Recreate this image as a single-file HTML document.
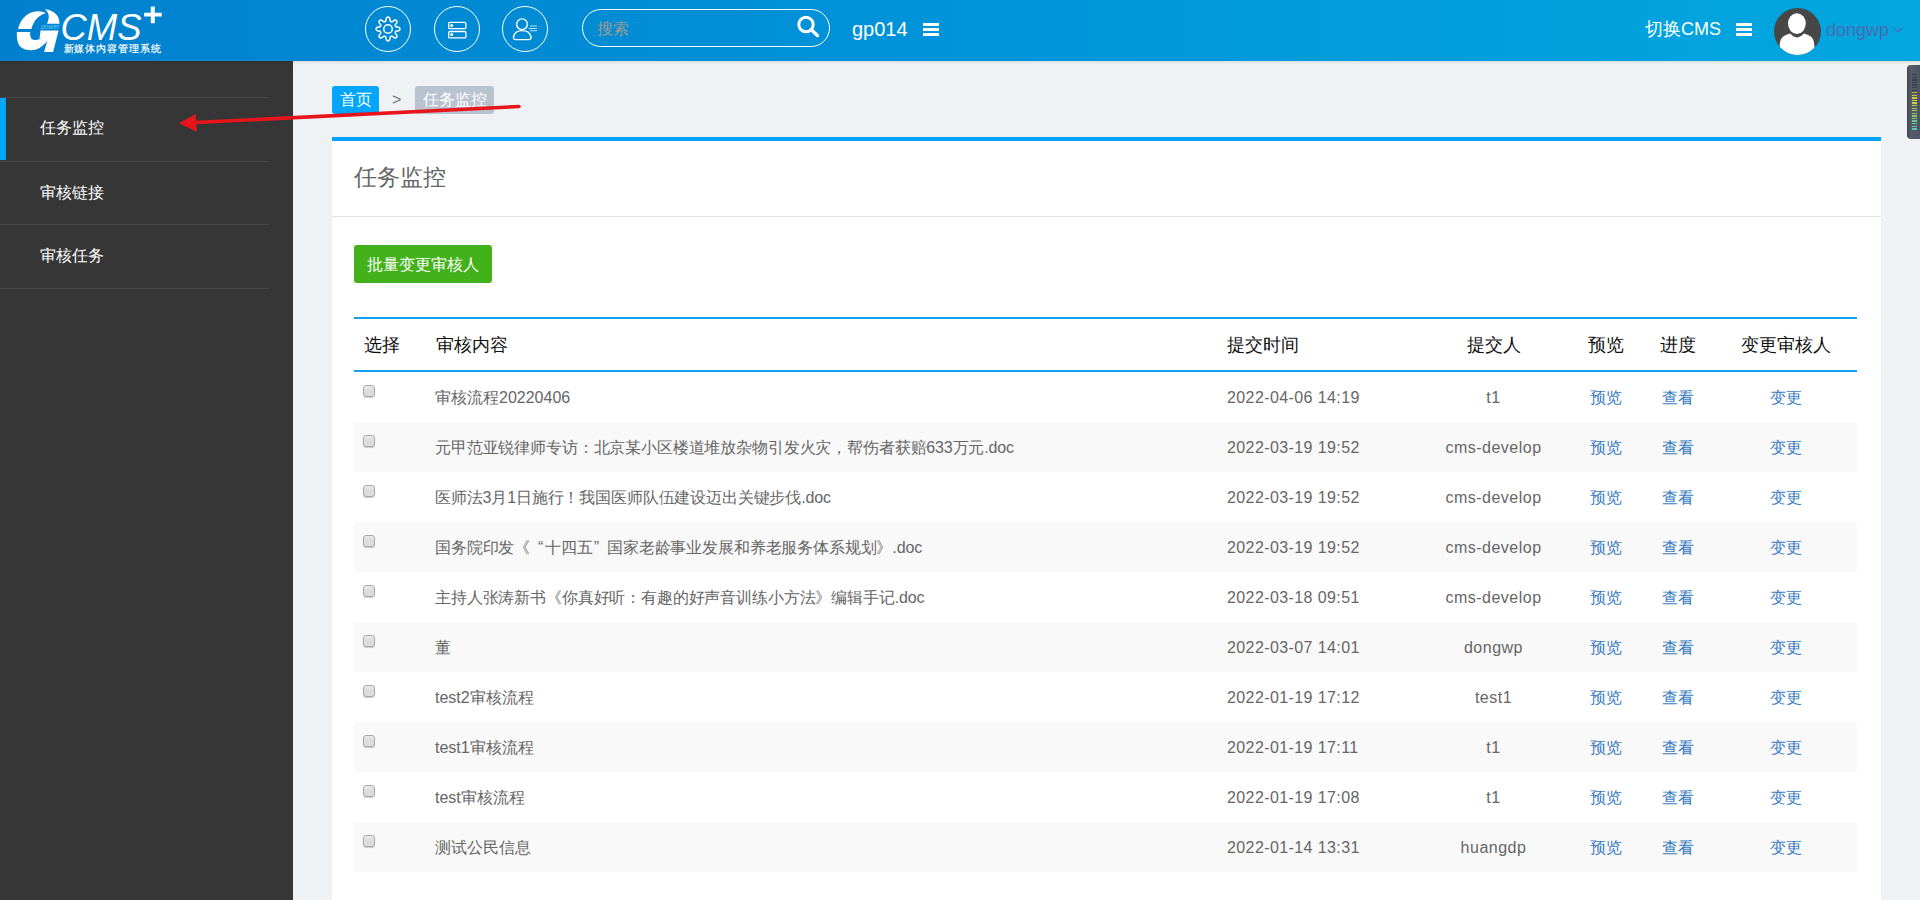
<!DOCTYPE html>
<html><head><meta charset="utf-8">
<style>
*{box-sizing:border-box;margin:0;padding:0}
html,body{width:1920px;height:900px;overflow:hidden;font-family:"Liberation Sans",sans-serif;background:#eef2f5}
.abs{position:absolute}
#hdr{position:absolute;z-index:2;box-shadow:0 1px 3px rgba(0,0,0,.12);left:0;top:0;width:1920px;height:61px;background:linear-gradient(to right,#0180ce 0%,#0094da 50%,#02a7df 100%)}
#side{position:absolute;left:0;top:61px;width:293px;height:839px;background:#363636}
.sl{position:absolute;left:0;width:269px;height:1px;background:#484848}
.si{position:absolute;left:40px;color:#fff;font-size:16px;line-height:20px;white-space:nowrap}
.circ{position:absolute;top:6px;width:46px;height:46px;border:1.3px solid #fff;border-radius:50%}
.txt{white-space:nowrap}
#panel{position:absolute;left:332px;top:137px;width:1549px;height:763px;background:#fff;border-top:4px solid #00a2ff}
table{position:absolute;left:22px;top:176px;width:1503px;border-collapse:collapse;table-layout:fixed}
th{height:53px;font-weight:normal;font-size:18px;color:#111;text-align:left;padding:0 10px;border-top:2px solid #0ea2f0;border-bottom:2px solid #0ea2f0}
td:nth-child(2){padding-left:9px}
.n{letter-spacing:-.15px}
td:nth-child(3){letter-spacing:.4px}
td:nth-child(4){letter-spacing:.5px}
td{height:50px;font-size:16px;line-height:20px;color:#666;padding:16px 10px 0;vertical-align:top;white-space:nowrap}
tr.s td{background:#f9f9f9}
tbody tr:first-child td{height:51px}
.c{text-align:center}
a{color:#3a7cc2;text-decoration:none}
.cb{display:inline-block;width:12px;height:12px;border:1px solid #a9a9a9;border-radius:3px;background:linear-gradient(#ececec,#dcdcdc 40%,#dcdcdc);box-shadow:0 1px 1px rgba(0,0,0,.2);position:relative;top:-6px;left:-1px}
</style></head><body>
<div id="hdr">
  <!-- logo -->
  <svg class="abs" style="left:0;top:0" width="175" height="60" viewBox="0 0 175 60">
    <path fill="#fff" d="M18.1 28.9 C19.5 23 22 19 26 15.5 C30 12.5 34 11.3 38.3 11.3 C41 11.3 43.5 12 45.8 13.2 C42.5 14.2 39.5 15.8 37.3 18 C34.5 21 32.5 24.5 31.4 28.9 Z"/>
    <path fill="#fff" d="M16.9 32 L30.2 32 C29.8 35 30.5 38.5 32.5 39.6 C35 40.8 38.5 39.5 41 38.5 C44 37.4 47.5 36.8 49.9 36.7 C47.5 41 44 45.5 39.5 48 C36.5 49.6 33.5 50.3 30.2 50.2 C25.5 50.1 21 48.5 18.7 44.5 C17 41.5 16.6 36 16.9 32 Z"/>
    <path fill="#fff" d="M44.7 9.2 C50 9.6 54 11.5 56.8 15 C58.8 17.8 59.4 20.5 59.5 23.7 L47 23.7 C48.3 20.5 49.3 17.5 48.5 14.5 C47.8 12 46.5 10.5 44.7 9.2 Z"/>
    <path fill="#fff" d="M40.6 30.6 L58.6 30.6 L53.1 52 L44.1 52 L48.2 37.4 L39.5 38.7 Z"/>
    <text x="41" y="28.8" font-family="Liberation Sans" font-size="6.6" font-style="italic" fill="#62cdf6" textLength="18.5" lengthAdjust="spacingAndGlyphs">power</text>
    <text x="60.5" y="40.3" font-family="Liberation Sans" font-size="37" font-style="italic" fill="#fff" textLength="81" lengthAdjust="spacingAndGlyphs">CMS</text>
    <path fill="#fff" d="M150.8 6.5 h4 v6.3 h6.9 v3.6 h-6.9 v6.9 h-4 v-6.9 h-6.7 v-3.6 h6.7 z"/>
    <text x="63.5" y="51.9" font-family="Liberation Sans" font-size="9.6" font-weight="normal" fill="#fff" stroke="#fff" stroke-width="0.2" textLength="97.5" lengthAdjust="spacing">新媒体内容管理系统</text>
  </svg>
  <div class="circ" style="left:365px"></div>
  <div class="circ" style="left:434px"></div>
  <div class="circ" style="left:502px"></div>
  <svg class="abs" style="left:374.2px;top:15.2px" width="28" height="28" viewBox="0 0 28 28">
    <path fill="none" stroke="#fff" stroke-width="1.5" stroke-linejoin="round" d="M25.90 14.00 L25.89 14.23 L25.85 14.47 L25.78 14.69 L25.68 14.92 L25.53 15.14 L25.31 15.34 L25.03 15.52 L24.65 15.69 L24.20 15.82 L23.71 15.93 L23.22 16.02 L22.77 16.10 L22.39 16.19 L22.09 16.28 L21.86 16.39 L21.69 16.50 L21.55 16.62 L21.45 16.75 L21.37 16.88 L21.30 17.02 L21.25 17.17 L21.21 17.32 L21.19 17.49 L21.20 17.67 L21.25 17.87 L21.33 18.11 L21.48 18.38 L21.69 18.71 L21.95 19.09 L22.23 19.50 L22.50 19.93 L22.73 20.34 L22.87 20.72 L22.95 21.05 L22.95 21.35 L22.91 21.61 L22.82 21.84 L22.71 22.05 L22.57 22.24 L22.41 22.41 L22.24 22.57 L22.05 22.71 L21.84 22.82 L21.61 22.91 L21.35 22.95 L21.05 22.95 L20.72 22.87 L20.34 22.73 L19.93 22.50 L19.50 22.23 L19.09 21.95 L18.71 21.69 L18.38 21.48 L18.11 21.33 L17.87 21.25 L17.67 21.20 L17.49 21.19 L17.32 21.21 L17.17 21.25 L17.02 21.30 L16.88 21.37 L16.75 21.45 L16.62 21.55 L16.50 21.69 L16.39 21.86 L16.28 22.09 L16.19 22.39 L16.10 22.77 L16.02 23.22 L15.93 23.71 L15.82 24.20 L15.69 24.65 L15.52 25.03 L15.34 25.31 L15.14 25.53 L14.92 25.68 L14.69 25.78 L14.47 25.85 L14.23 25.89 L14.00 25.90 L13.77 25.89 L13.53 25.85 L13.31 25.78 L13.08 25.68 L12.86 25.53 L12.66 25.31 L12.48 25.03 L12.31 24.65 L12.18 24.20 L12.07 23.71 L11.98 23.22 L11.90 22.77 L11.81 22.39 L11.72 22.09 L11.61 21.86 L11.50 21.69 L11.38 21.55 L11.25 21.45 L11.12 21.37 L10.98 21.30 L10.83 21.25 L10.68 21.21 L10.51 21.19 L10.33 21.20 L10.13 21.25 L9.89 21.33 L9.62 21.48 L9.29 21.69 L8.91 21.95 L8.50 22.23 L8.07 22.50 L7.66 22.73 L7.28 22.87 L6.95 22.95 L6.65 22.95 L6.39 22.91 L6.16 22.82 L5.95 22.71 L5.76 22.57 L5.59 22.41 L5.43 22.24 L5.29 22.05 L5.18 21.84 L5.09 21.61 L5.05 21.35 L5.05 21.05 L5.13 20.72 L5.27 20.34 L5.50 19.93 L5.77 19.50 L6.05 19.09 L6.31 18.71 L6.52 18.38 L6.67 18.11 L6.75 17.87 L6.80 17.67 L6.81 17.49 L6.79 17.32 L6.75 17.17 L6.70 17.02 L6.63 16.88 L6.55 16.75 L6.45 16.62 L6.31 16.50 L6.14 16.39 L5.91 16.28 L5.61 16.19 L5.23 16.10 L4.78 16.02 L4.29 15.93 L3.80 15.82 L3.35 15.69 L2.97 15.52 L2.69 15.34 L2.47 15.14 L2.32 14.92 L2.22 14.69 L2.15 14.47 L2.11 14.23 L2.10 14.00 L2.11 13.77 L2.15 13.53 L2.22 13.31 L2.32 13.08 L2.47 12.86 L2.69 12.66 L2.97 12.48 L3.35 12.31 L3.80 12.18 L4.29 12.07 L4.78 11.98 L5.23 11.90 L5.61 11.81 L5.91 11.72 L6.14 11.61 L6.31 11.50 L6.45 11.38 L6.55 11.25 L6.63 11.12 L6.70 10.98 L6.75 10.83 L6.79 10.68 L6.81 10.51 L6.80 10.33 L6.75 10.13 L6.67 9.89 L6.52 9.62 L6.31 9.29 L6.05 8.91 L5.77 8.50 L5.50 8.07 L5.27 7.66 L5.13 7.28 L5.05 6.95 L5.05 6.65 L5.09 6.39 L5.18 6.16 L5.29 5.95 L5.43 5.76 L5.59 5.59 L5.76 5.43 L5.95 5.29 L6.16 5.18 L6.39 5.09 L6.65 5.05 L6.95 5.05 L7.28 5.13 L7.66 5.27 L8.07 5.50 L8.50 5.77 L8.91 6.05 L9.29 6.31 L9.62 6.52 L9.89 6.67 L10.13 6.75 L10.33 6.80 L10.51 6.81 L10.68 6.79 L10.83 6.75 L10.98 6.70 L11.12 6.63 L11.25 6.55 L11.38 6.45 L11.50 6.31 L11.61 6.14 L11.72 5.91 L11.81 5.61 L11.90 5.23 L11.98 4.78 L12.07 4.29 L12.18 3.80 L12.31 3.35 L12.48 2.97 L12.66 2.69 L12.86 2.47 L13.08 2.32 L13.31 2.22 L13.53 2.15 L13.77 2.11 L14.00 2.10 L14.23 2.11 L14.47 2.15 L14.69 2.22 L14.92 2.32 L15.14 2.47 L15.34 2.69 L15.52 2.97 L15.69 3.35 L15.82 3.80 L15.93 4.29 L16.02 4.78 L16.10 5.23 L16.19 5.61 L16.28 5.91 L16.39 6.14 L16.50 6.31 L16.62 6.45 L16.75 6.55 L16.88 6.63 L17.02 6.70 L17.17 6.75 L17.32 6.79 L17.49 6.81 L17.67 6.80 L17.87 6.75 L18.11 6.67 L18.38 6.52 L18.71 6.31 L19.09 6.05 L19.50 5.77 L19.93 5.50 L20.34 5.27 L20.72 5.13 L21.05 5.05 L21.35 5.05 L21.61 5.09 L21.84 5.18 L22.05 5.29 L22.24 5.43 L22.41 5.59 L22.57 5.76 L22.71 5.95 L22.82 6.16 L22.91 6.39 L22.95 6.65 L22.95 6.95 L22.87 7.28 L22.73 7.66 L22.50 8.07 L22.23 8.50 L21.95 8.91 L21.69 9.29 L21.48 9.62 L21.33 9.89 L21.25 10.13 L21.20 10.33 L21.19 10.51 L21.21 10.68 L21.25 10.83 L21.30 10.98 L21.37 11.12 L21.45 11.25 L21.55 11.38 L21.69 11.50 L21.86 11.61 L22.09 11.72 L22.39 11.81 L22.77 11.90 L23.22 11.98 L23.71 12.07 L24.20 12.18 L24.65 12.31 L25.03 12.48 L25.31 12.66 L25.53 12.86 L25.68 13.08 L25.78 13.31 L25.85 13.53 L25.89 13.77 Z"/>
    <circle cx="14" cy="14" r="4.3" fill="none" stroke="#fff" stroke-width="1.5"/>
  </svg>
  <svg class="abs" style="left:443px;top:15px" width="28" height="28" viewBox="0 0 28 28">
    <rect x="5.7" y="7.3" width="17.2" height="6.4" rx="1.2" fill="none" stroke="#fff" stroke-width="1.3"/>
    <rect x="5.7" y="16.5" width="17.2" height="6.4" rx="1.2" fill="none" stroke="#fff" stroke-width="1.3"/>
    <circle cx="8.7" cy="10.4" r="1.5" fill="#fff"/>
    <circle cx="8.7" cy="19.6" r="1.5" fill="#fff"/>
  </svg>
  <svg class="abs" style="left:511px;top:15px" width="28" height="28" viewBox="0 0 28 28">
    <circle cx="11" cy="9.3" r="5.4" fill="none" stroke="#fff" stroke-width="1.4"/>
    <path fill="none" stroke="#fff" stroke-width="1.4" d="M4.5 24.6 C2.3 24.6 2.3 23 2.6 21.5 C3.5 18 7 15.6 11.3 15.6 C15.6 15.6 19 18 19.9 21.5 C20.2 23 20.2 24.6 18 24.6 Z"/>
    <path stroke="#b8def5" stroke-width="1.1" d="M19 11 H26 M17.8 13.5 H26 M19 15.8 H26"/>
  </svg>
  <div class="abs" style="left:582px;top:9px;width:248px;height:38px;border:1px solid #fff;border-radius:19px"></div>
  <div class="abs txt" style="left:597px;top:19px;font-size:16px;line-height:20px;color:#a09a90">搜索</div>
  <svg class="abs" style="left:794px;top:13px" width="26" height="26" viewBox="0 0 26 26">
    <circle cx="12" cy="11.5" r="7.2" fill="none" stroke="#fff" stroke-width="3"/>
    <path d="M17.5 17 L23.5 22.5" stroke="#fff" stroke-width="3.4" stroke-linecap="round"/>
  </svg>
  <div class="abs txt" style="left:852px;top:18px;font-size:20px;line-height:23px;color:#fff">gp014</div>
  <div class="abs" style="left:923px;top:23px;width:16px;height:3px;background:#fff"></div>
  <div class="abs" style="left:923px;top:28px;width:16px;height:3px;background:#fff"></div>
  <div class="abs" style="left:923px;top:33px;width:16px;height:3px;background:#fff"></div>

  <div class="abs txt" style="left:1645px;top:18px;font-size:18px;line-height:22px;color:#fff">切换CMS</div>
  <div class="abs" style="left:1736px;top:23px;width:16px;height:3px;background:#fff"></div>
  <div class="abs" style="left:1736px;top:28px;width:16px;height:3px;background:#fff"></div>
  <div class="abs" style="left:1736px;top:33px;width:16px;height:3px;background:#fff"></div>
  <svg class="abs" style="left:1774px;top:8px" width="47" height="47" viewBox="0 0 47 47">
    <defs><clipPath id="av"><circle cx="23.5" cy="23.5" r="23.5"/></clipPath></defs>
    <circle cx="23.5" cy="23.5" r="23.5" fill="#474747"/>
    <g clip-path="url(#av)">
      <ellipse cx="22.9" cy="15.6" rx="8.9" ry="10.3" fill="#fff"/>
      <path fill="#fff" d="M5 47 L5.6 38 C5.8 33 7 29.8 10 28 C12 26.8 14 26 16.2 25.6 C18 28 20.5 29.4 23 29.4 C25.5 29.4 28 28 29.8 25.6 C32 26 34 26.8 36 28 C39 29.8 40.2 33 40.4 38 L41 47 Z"/>
    </g>
  </svg>
  <div class="abs txt" style="left:1826px;top:19px;font-size:18px;line-height:22px;color:#4a6cb0">dongwp</div>
  <svg class="abs" style="left:1892px;top:26px" width="12" height="8" viewBox="0 0 12 8"><path d="M1.5 1.5 L6 6 L10.5 1.5" fill="none" stroke="#4a6db5" stroke-width="1.2"/></svg>
</div>

<div id="side">
  <div class="sl" style="top:36px"></div>
  <div class="abs" style="left:0;top:37px;width:6px;height:62px;background:#00a6f7"></div>
  <div class="si" style="top:57px">任务监控</div>
  <div class="sl" style="top:100px"></div>
  <div class="si" style="top:122px">审核链接</div>
  <div class="sl" style="top:163px"></div>
  <div class="si" style="top:185px">审核任务</div>
  <div class="sl" style="top:227px"></div>
</div>

<!-- breadcrumb -->
<div class="abs txt" style="left:332px;top:86px;width:47px;height:28px;background:#00a6fc;border-radius:3px;color:#fff;font-size:16px;line-height:28px;text-align:center">首页</div>
<div class="abs txt" style="left:392px;top:90px;font-size:16px;line-height:20px;color:#6f6f6f">&gt;</div>
<div class="abs txt" style="left:415px;top:86px;width:79px;height:28px;background:#b9c3cf;border-radius:3px;color:#fff;font-size:16px;line-height:28px;text-align:center">任务监控</div>

<div id="panel">
  <div class="abs txt" style="left:22px;top:21px;font-size:23px;line-height:30px;color:#666">任务监控</div>
  <div class="abs" style="left:0;top:75px;width:1549px;height:1px;background:#e1e1e1"></div>
  <div class="abs txt" style="left:22px;top:104px;width:138px;height:38px;background:#43b11a;border-radius:3px;color:#fff;font-size:16px;line-height:40px;text-align:center">批量变更审核人</div>
  <table>
    <colgroup><col style="width:72px"><col style="width:791px"><col style="width:199px"><col style="width:155px"><col style="width:70px"><col style="width:73px"><col style="width:143px"></colgroup>
    <thead><tr><th>选择</th><th>审核内容</th><th>提交时间</th><th class="c">提交人</th><th class="c">预览</th><th class="c">进度</th><th class="c">变更审核人</th></tr></thead>
    <tbody>
    <tr><td><span class="cb"></span></td><td>审核流程20220406</td><td>2022-04-06 14:19</td><td class="c">t1</td><td class="c"><a>预览</a></td><td class="c"><a>查看</a></td><td class="c"><a>变更</a></td></tr>
    <tr class="s"><td><span class="cb"></span></td><td class="n">元甲范亚锐律师专访：北京某小区楼道堆放杂物引发火灾，帮伤者获赔633万元.doc</td><td>2022-03-19 19:52</td><td class="c">cms-develop</td><td class="c"><a>预览</a></td><td class="c"><a>查看</a></td><td class="c"><a>变更</a></td></tr>
    <tr><td><span class="cb"></span></td><td class="n">医师法3月1日施行！我国医师队伍建设迈出关键步伐.doc</td><td>2022-03-19 19:52</td><td class="c">cms-develop</td><td class="c"><a>预览</a></td><td class="c"><a>查看</a></td><td class="c"><a>变更</a></td></tr>
    <tr class="s"><td><span class="cb"></span></td><td class="n">国务院印发《<span style="margin:0 2px 0 8px">“</span>十四五<span style="margin:0 8px 0 1px">”</span>国家老龄事业发展和养老服务体系规划》.doc</td><td>2022-03-19 19:52</td><td class="c">cms-develop</td><td class="c"><a>预览</a></td><td class="c"><a>查看</a></td><td class="c"><a>变更</a></td></tr>
    <tr><td><span class="cb"></span></td><td class="n">主持人张涛新书《你真好听：有趣的好声音训练小方法》编辑手记.doc</td><td>2022-03-18 09:51</td><td class="c">cms-develop</td><td class="c"><a>预览</a></td><td class="c"><a>查看</a></td><td class="c"><a>变更</a></td></tr>
    <tr class="s"><td><span class="cb"></span></td><td>董</td><td>2022-03-07 14:01</td><td class="c">dongwp</td><td class="c"><a>预览</a></td><td class="c"><a>查看</a></td><td class="c"><a>变更</a></td></tr>
    <tr><td><span class="cb"></span></td><td>test2审核流程</td><td>2022-01-19 17:12</td><td class="c">test1</td><td class="c"><a>预览</a></td><td class="c"><a>查看</a></td><td class="c"><a>变更</a></td></tr>
    <tr class="s"><td><span class="cb"></span></td><td>test1审核流程</td><td>2022-01-19 17:11</td><td class="c">t1</td><td class="c"><a>预览</a></td><td class="c"><a>查看</a></td><td class="c"><a>变更</a></td></tr>
    <tr><td><span class="cb"></span></td><td>test审核流程</td><td>2022-01-19 17:08</td><td class="c">t1</td><td class="c"><a>预览</a></td><td class="c"><a>查看</a></td><td class="c"><a>变更</a></td></tr>
    <tr class="s"><td><span class="cb"></span></td><td>测试公民信息</td><td>2022-01-14 13:31</td><td class="c">huangdp</td><td class="c"><a>预览</a></td><td class="c"><a>查看</a></td><td class="c"><a>变更</a></td></tr>
    </tbody>
  </table>
</div>

<!-- red arrow -->
<svg class="abs" style="left:0;top:0" width="600" height="200" viewBox="0 0 600 200">
  <path d="M519 106.5 L195 122.5" stroke="#e8141c" stroke-width="3.6" stroke-linecap="round"/>
  <path d="M179 123.3 L195.7 114 L196.7 131.7 Z" fill="#e8141c"/>
</svg>

<!-- right widget -->
<div class="abs" style="left:1907px;top:65px;width:13px;height:74px;background:linear-gradient(to right,#3f4450,#565c69 30%,#4e5461);border-radius:4px 0 0 4px"></div>
<div class="abs" style="left:1912px;top:74.0px;width:5px;height:1.4px;background:#3a3f48"></div><div class="abs" style="left:1912px;top:76.6px;width:5px;height:1.4px;background:#3a3f48"></div><div class="abs" style="left:1912px;top:79.2px;width:5px;height:1.4px;background:#3a3f48"></div><div class="abs" style="left:1912px;top:81.7px;width:5px;height:1.4px;background:#3a3f48"></div><div class="abs" style="left:1912px;top:84.3px;width:5px;height:1.4px;background:#3a3f48"></div><div class="abs" style="left:1912px;top:86.9px;width:5px;height:1.4px;background:#3a3f48"></div><div class="abs" style="left:1912px;top:89.5px;width:5px;height:1.4px;background:#3a3f48"></div><div class="abs" style="left:1912px;top:92.1px;width:5px;height:1.4px;background:#c9a640"></div><div class="abs" style="left:1912px;top:94.6px;width:5px;height:1.4px;background:#d9c23c"></div><div class="abs" style="left:1912px;top:97.2px;width:5px;height:1.4px;background:#d3c13c"></div><div class="abs" style="left:1912px;top:99.8px;width:5px;height:1.4px;background:#d8d040"></div><div class="abs" style="left:1912px;top:102.4px;width:5px;height:1.4px;background:#c8cc46"></div><div class="abs" style="left:1912px;top:105.0px;width:5px;height:1.4px;background:#c2d048"></div><div class="abs" style="left:1912px;top:107.5px;width:5px;height:1.4px;background:#a9c454"></div><div class="abs" style="left:1912px;top:110.1px;width:5px;height:1.4px;background:#a6cc5c"></div><div class="abs" style="left:1912px;top:112.7px;width:5px;height:1.4px;background:#90c264"></div><div class="abs" style="left:1912px;top:115.3px;width:5px;height:1.4px;background:#86c46c"></div><div class="abs" style="left:1912px;top:117.9px;width:5px;height:1.4px;background:#78c27a"></div><div class="abs" style="left:1912px;top:120.4px;width:5px;height:1.4px;background:#6cc488"></div><div class="abs" style="left:1912px;top:123.0px;width:5px;height:1.4px;background:#64c296"></div><div class="abs" style="left:1912px;top:125.6px;width:5px;height:1.4px;background:#58c4a2"></div><div class="abs" style="left:1912px;top:128.2px;width:5px;height:1.4px;background:#56c8b0"></div>
</body></html>
